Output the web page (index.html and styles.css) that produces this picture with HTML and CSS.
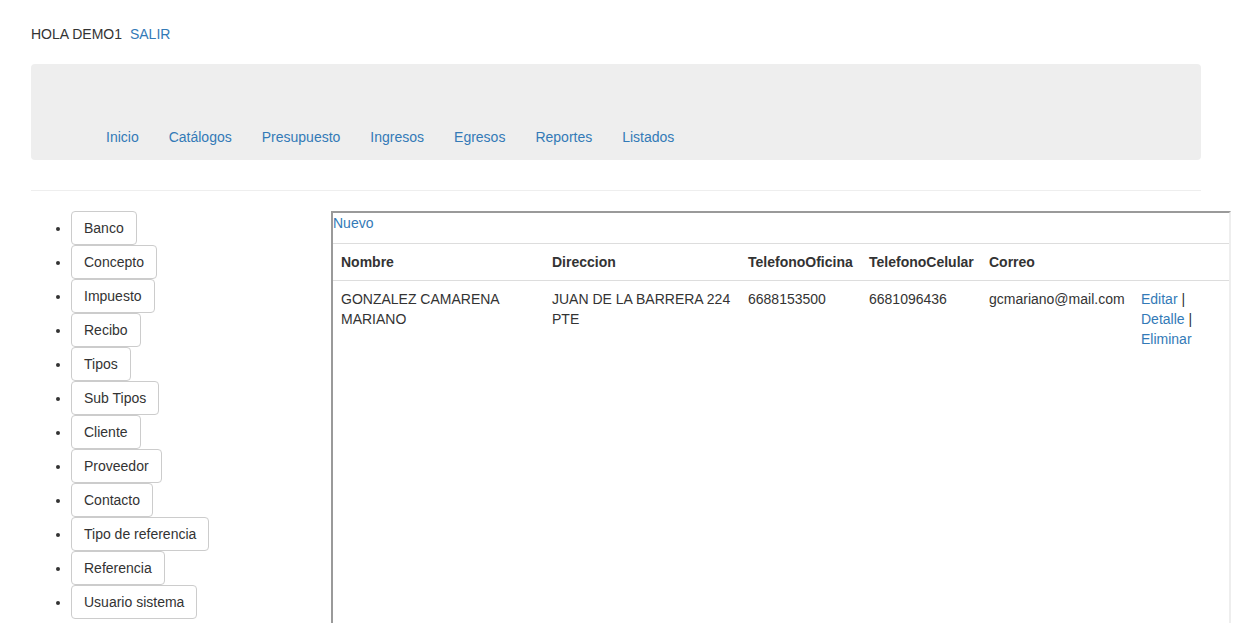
FILE: index.html
```html
<!DOCTYPE html>
<html lang="es">
<head>
<meta charset="utf-8">
<title>Catálogos</title>
<link rel="stylesheet" href="styles.css">
</head>
<body>
<div class="page">
  <div class="greeting">HOLA DEMO1 <a href="#" class="link">SALIR</a></div>
  <nav class="navbar">
    <ul class="nav">
      <li><a href="#">Inicio</a></li>
      <li><a href="#">Catálogos</a></li>
      <li><a href="#">Presupuesto</a></li>
      <li><a href="#">Ingresos</a></li>
      <li><a href="#">Egresos</a></li>
      <li><a href="#">Reportes</a></li>
      <li><a href="#">Listados</a></li>
    </ul>
  </nav>
  <hr class="divider">
  <div class="main">
    <div class="side">
      <ul class="menu">
        <li><span class="btn">Banco</span></li>
        <li><span class="btn">Concepto</span></li>
        <li><span class="btn">Impuesto</span></li>
        <li><span class="btn">Recibo</span></li>
        <li><span class="btn">Tipos</span></li>
        <li><span class="btn">Sub Tipos</span></li>
        <li><span class="btn">Cliente</span></li>
        <li><span class="btn">Proveedor</span></li>
        <li><span class="btn">Contacto</span></li>
        <li><span class="btn">Tipo de referencia</span></li>
        <li><span class="btn">Referencia</span></li>
        <li><span class="btn">Usuario sistema</span></li>
      </ul>
    </div>
    <div class="frame">
      <p class="new"><a href="#" class="link">Nuevo</a></p>
      <table class="table">
        <colgroup>
          <col class="c1"><col class="c2"><col class="c3"><col class="c4"><col class="c5"><col class="c6">
        </colgroup>
        <tbody>
          <tr>
            <th>Nombre</th>
            <th>Direccion</th>
            <th>TelefonoOficina</th>
            <th>TelefonoCelular</th>
            <th>Correo</th>
            <th></th>
          </tr>
          <tr>
            <td>GONZALEZ CAMARENA MARIANO</td>
            <td>JUAN DE LA BARRERA 224 PTE</td>
            <td>6688153500</td>
            <td>6681096436</td>
            <td>gcmariano@mail.com</td>
            <td><a href="#" class="link">Editar</a> |<br><a href="#" class="link">Detalle</a> |<br><a href="#" class="link">Eliminar</a></td>
          </tr>
        </tbody>
      </table>
    </div>
  </div>
</div>
</body>
</html>
```

FILE: styles.css
```css
* {
  box-sizing: border-box;
}

html, body {
  margin: 0;
  padding: 0;
  background: #fff;
}

body {
  font-family: "Liberation Sans", Arial, Helvetica, sans-serif;
  font-size: 14px;
  line-height: 20px;
  color: #333;
  overflow: hidden;
}

a {
  text-decoration: none;
}

.link {
  color: #337ab7;
}

.page {
  width: 1201px;
  padding-left: 31px;
  padding-top: 24px;
}

.greeting {
  height: 20px;
  margin-bottom: 20px;
}

.greeting .link {
  margin-left: 4px;
}

.navbar {
  height: 96px;
  background: #eee;
  border-radius: 4px;
  padding-top: 53px;
  padding-left: 60px;
}

.nav {
  list-style: none;
  margin: 0;
  padding: 0;
  display: flex;
}

.nav a {
  display: block;
  padding: 10px 15px;
  color: #337ab7;
}

.divider {
  margin: 30px 0 20px;
  border: 0;
  border-top: 1px solid #eee;
  height: 0;
}

.main {
  display: flex;
  align-items: flex-start;
}

.side {
  width: 300px;
  flex: none;
}

.menu {
  margin: 0 0 10px;
  padding-left: 40px;
}

.btn {
  display: inline-block;
  padding: 6px 12px;
  border: 1px solid #ccc;
  border-radius: 4px;
  background: #fff;
  color: #333;
  line-height: 20px;
  white-space: nowrap;
}

.frame {
  width: 900px;
  height: 430px;
  flex: none;
  border: 2px solid;
  border-color: #9a9a9a #eeeeee #eeeeee #9a9a9a;
}

.new {
  margin: 0 0 10px;
}

.table {
  width: 896px;
  border-collapse: collapse;
  border-spacing: 0;
  table-layout: fixed;
}

.c1 { width: 211px; }
.c2 { width: 196px; }
.c3 { width: 121px; }
.c4 { width: 120px; }
.c5 { width: 152px; }
.c6 { width: 96px; }

.table th,
.table td {
  padding: 8px;
  border-top: 1px solid #ddd;
  text-align: left;
  vertical-align: top;
  line-height: 20px;
}

.table th {
  font-weight: bold;
  white-space: nowrap;
}
```
